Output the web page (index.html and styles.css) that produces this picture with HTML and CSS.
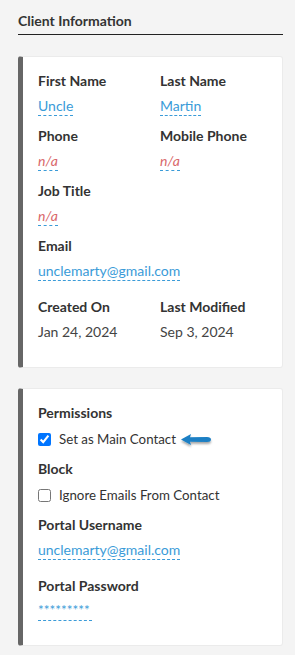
FILE: index.html
```html
<!DOCTYPE html>
<html>
<head>
<meta charset="utf-8">
<link rel="stylesheet" href="styles.css">
</head>
<body>
<div class="page">
  <h2 class="section-title">Client Information</h2>

  <div class="card card-info">
    <div class="grid">
      <div class="field">
        <div class="label">First Name</div>
        <div class="value"><span class="link">Uncle</span></div>
      </div>
      <div class="field">
        <div class="label">Last Name</div>
        <div class="value"><span class="link">Martin</span></div>
      </div>
      <div class="field">
        <div class="label">Phone</div>
        <div class="value"><span class="link empty">n/a</span></div>
      </div>
      <div class="field">
        <div class="label">Mobile Phone</div>
        <div class="value"><span class="link empty">n/a</span></div>
      </div>
      <div class="field">
        <div class="label">Job Title</div>
        <div class="value"><span class="link empty">n/a</span></div>
      </div>
      <div class="field"></div>
      <div class="field wide">
        <div class="label">Email</div>
        <div class="value"><span class="link">unclemarty@gmail.com</span></div>
      </div>
      <div class="field meta">
        <div class="label">Created On</div>
        <div class="value plain">Jan 24, 2024</div>
      </div>
      <div class="field meta">
        <div class="label">Last Modified</div>
        <div class="value plain">Sep 3, 2024</div>
      </div>
    </div>
  </div>

  <div class="card card-perm">
    <div class="field">
      <div class="label check-label">Permissions</div>
      <label class="check">
        <input type="checkbox" checked>
        <span>Set as Main Contact</span>
        <svg class="arrow" width="36" height="18" viewBox="0 0 36 18">
          <defs>
            <filter id="sh" x="-30%" y="-50%" width="160%" height="220%">
              <feDropShadow dx="0" dy="2" stdDeviation="1.3" flood-color="#000" flood-opacity="0.35"/>
            </filter>
          </defs>
          <path d="M2 7.5 L12 2 L11 5.2 L28 5 Q32 5 32 7.5 Q32 10 28 10 L11 9.8 L12 13 Z" fill="#1b7fc4" filter="url(#sh)"/>
        </svg>
      </label>
    </div>
    <div class="field">
      <div class="label check-label">Block</div>
      <label class="check">
        <input type="checkbox">
        <span>Ignore Emails From Contact</span>
      </label>
    </div>
    <div class="field user">
      <div class="label">Portal Username</div>
      <div class="value"><span class="link">unclemarty@gmail.com</span></div>
    </div>
    <div class="field pw">
      <div class="label">Portal Password</div>
      <div class="value"><span class="link stars">*********</span></div>
    </div>
  </div>
</div>
</body>
</html>
```

FILE: styles.css
```css
* { box-sizing: border-box; }
html, body { margin: 0; padding: 0; }
body {
  background: #f4f4f4;
  font-family: "Source Sans Pro", "Lato", "Noto Sans", sans-serif;
  color: #333;
  font-size: 14px;
}
.page {
  padding: 12px 12px 0 18px;
  width: 295px;
}
.section-title {
  margin: 0;
  font-size: 14px;
  font-weight: 700;
  line-height: 18px;
  padding-bottom: 4px;
  border-bottom: 1px solid #222;
  color: #333;
}
.card {
  background: #fff;
  border: 1px solid #ebebeb;
  border-left: 5px solid #666;
  border-radius: 3px;
  margin-top: 21px;
  padding: 14px 12px 25px 15px;
}
.card-perm { margin-top: 20px; padding-bottom: 24px; }
.grid {
  display: grid;
  grid-template-columns: 122px 1fr;
}
.wide { grid-column: 1 / 3; }
.field { margin-bottom: 10px; }
.label {
  font-weight: 700;
  line-height: 20px;
  margin-bottom: 5px;
  color: #333;
}
.check-label { margin-bottom: 6px; }
.value { line-height: 18px; }
.link {
  display: inline-block;
  color: #3a9bd8;
  border-bottom: 1px dashed #3a9bd8;
  line-height: 19px;
}
.empty {
  color: #d9686a;
  font-style: italic;
}
.plain { color: #444; line-height: 20px; }
.meta { margin-top: 6px; margin-bottom: 0; }
.check {
  display: flex;
  align-items: center;
  height: 20px;
  color: #333;
  font-size: 13.3px;
}
.check input {
  width: 13px;
  height: 13px;
  margin: 0 8px 0 0;
  accent-color: #0075ff;
}
.arrow { margin-left: 3px; margin-top: 3px; }
.user { margin-bottom: 16px; }
.pw { margin-bottom: 0; }
.pw .label { margin-bottom: 5px; }
.stars {
  font-size: 13.5px;
  line-height: 19px;
  padding-right: 2px;
}
```
